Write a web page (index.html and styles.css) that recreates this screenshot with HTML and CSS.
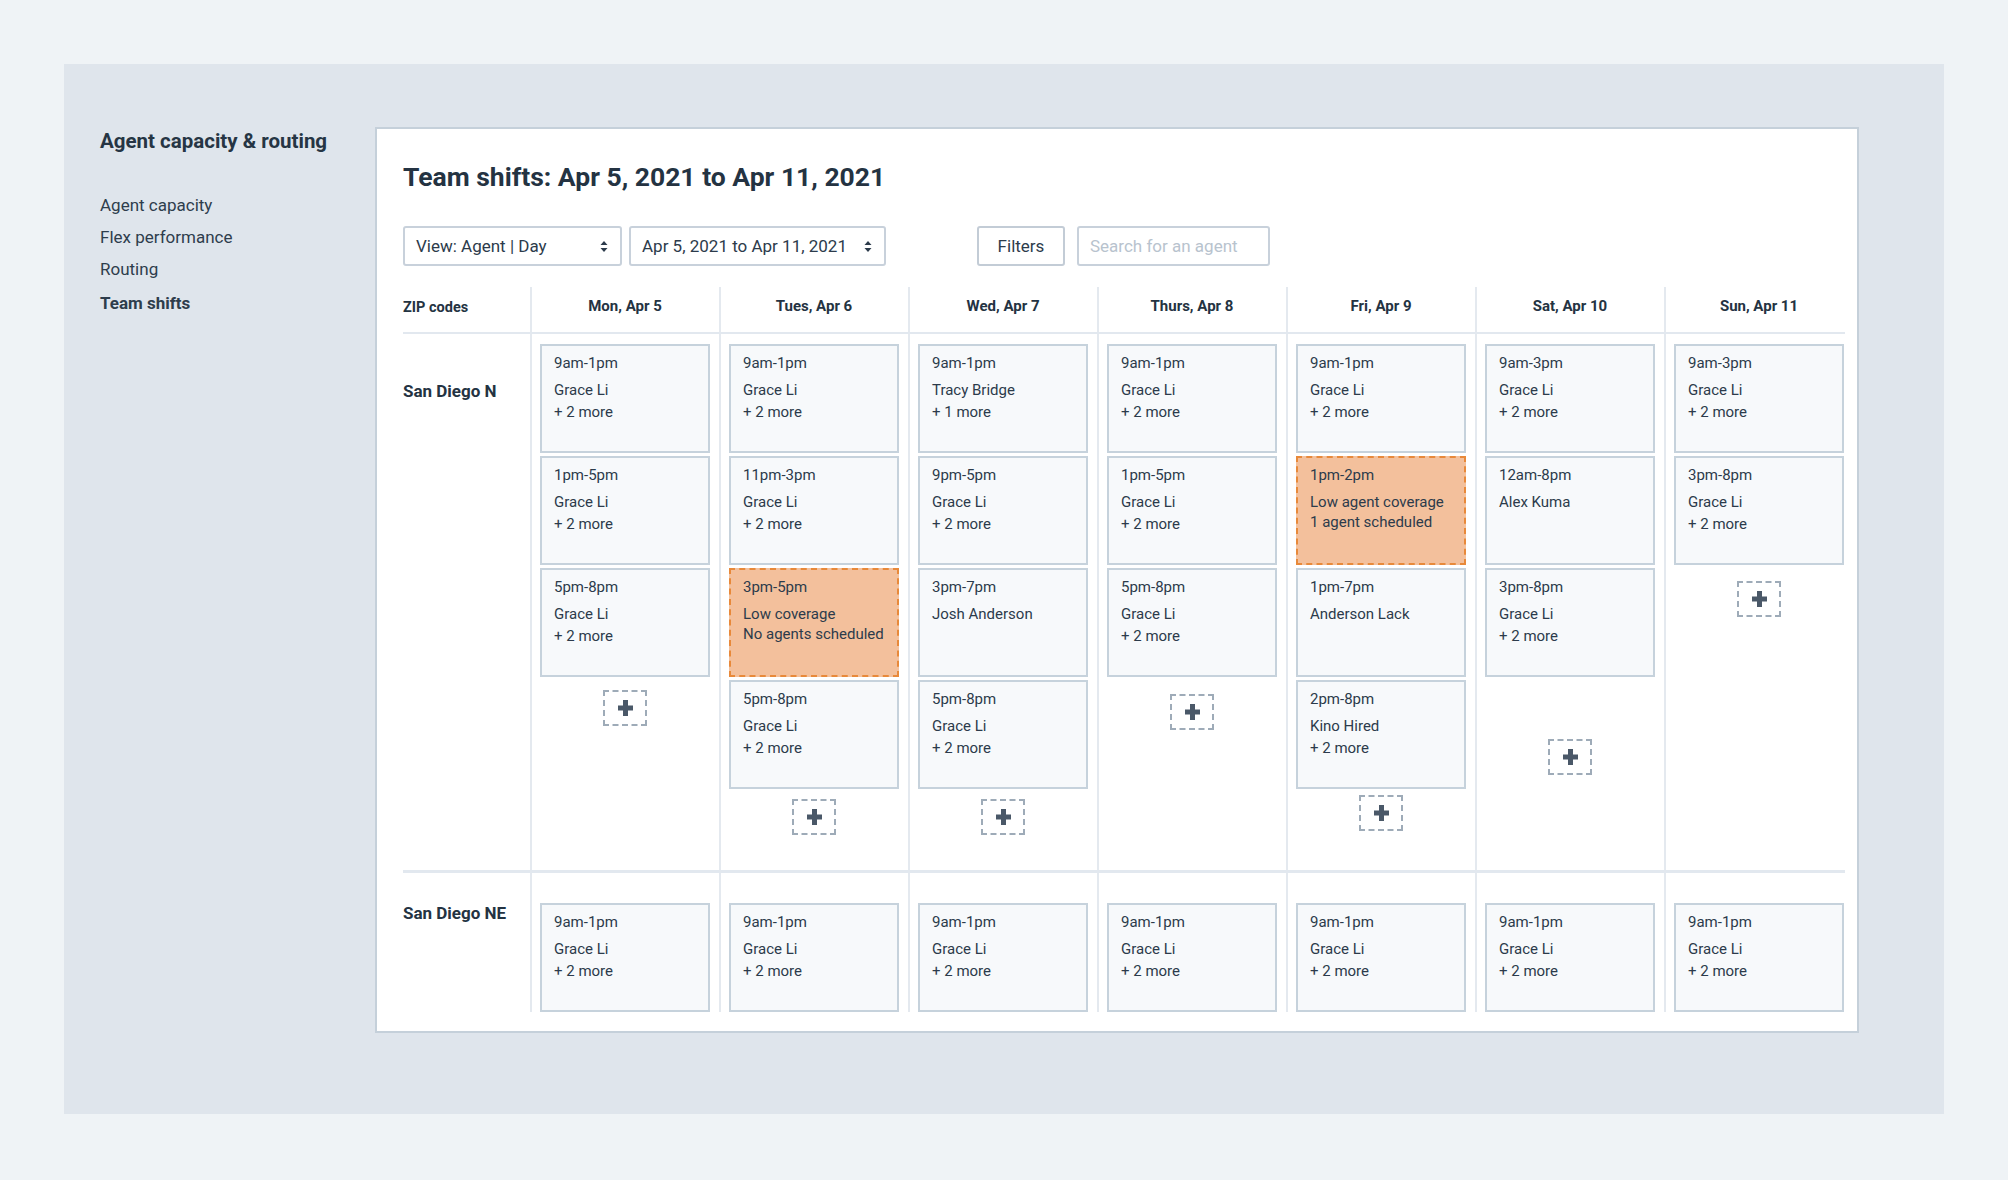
FILE: index.html
```html
<!DOCTYPE html>
<html lang="en">
<head>
<meta charset="utf-8">
<title>Team shifts</title>
<link rel="stylesheet" href="styles.css">
</head>
<body>
<div class="shell">
  <aside class="sidebar">
    <h2 class="sidebar-title">Agent capacity &amp; routing</h2>
    <nav class="nav">
      <a class="nav-item">Agent capacity</a>
      <a class="nav-item">Flex performance</a>
      <a class="nav-item">Routing</a>
      <a class="nav-item nav-item--active">Team shifts</a>
    </nav>
  </aside>

  <main class="panel">
    <h1 class="title">Team shifts: Apr 5, 2021 to Apr 11, 2021</h1>

    <div class="controls">
      <div class="select select--view">
        <span>View: Agent | Day</span>
        <svg class="caret" width="8" height="11" viewBox="0 0 8 11"><path d="M4 0 L7.5 4 L0.5 4 Z M4 11 L7.5 7 L0.5 7 Z" fill="#2c3b4b"/></svg>
      </div>
      <div class="select select--range">
        <span>Apr 5, 2021 to Apr 11, 2021</span>
        <svg class="caret" width="8" height="11" viewBox="0 0 8 11"><path d="M4 0 L7.5 4 L0.5 4 Z M4 11 L7.5 7 L0.5 7 Z" fill="#2c3b4b"/></svg>
      </div>
      <button class="btn">Filters</button>
      <div class="search">Search for an agent</div>
    </div>

    <div class="table">
      <div class="trow trow--head">
        <div class="zip-head">ZIP codes</div>
        <div class="day-head"><span>Mon, Apr 5</span></div>
        <div class="day-head"><span>Tues, Apr 6</span></div>
        <div class="day-head"><span>Wed, Apr 7</span></div>
        <div class="day-head"><span>Thurs, Apr 8</span></div>
        <div class="day-head"><span>Fri, Apr 9</span></div>
        <div class="day-head"><span>Sat, Apr 10</span></div>
        <div class="day-head"><span>Sun, Apr 11</span></div>
      </div>

      <div class="trow trow--first">
        <div class="zip zip--first">San Diego N</div>

        <div class="day">
          <div class="shift"><div class="time">9am-1pm</div><div>Grace Li</div><div>+ 2 more</div></div>
          <div class="shift"><div class="time">1pm-5pm</div><div>Grace Li</div><div>+ 2 more</div></div>
          <div class="shift"><div class="time">5pm-8pm</div><div>Grace Li</div><div>+ 2 more</div></div>
          <div class="add add--m15"><svg width="15" height="16" viewBox="0 0 15 16"><rect x="0" y="5.5" width="15" height="5" fill="#4a5868"/><rect x="5" y="0" width="5" height="16" fill="#4a5868"/></svg></div>
        </div>

        <div class="day">
          <div class="shift"><div class="time">9am-1pm</div><div>Grace Li</div><div>+ 2 more</div></div>
          <div class="shift"><div class="time">11pm-3pm</div><div>Grace Li</div><div>+ 2 more</div></div>
          <div class="shift shift--alert"><div class="time">3pm-5pm</div><div>Low coverage</div><div>No agents scheduled</div></div>
          <div class="shift"><div class="time">5pm-8pm</div><div>Grace Li</div><div>+ 2 more</div></div>
          <div class="add"><svg width="15" height="16" viewBox="0 0 15 16"><rect x="0" y="5.5" width="15" height="5" fill="#4a5868"/><rect x="5" y="0" width="5" height="16" fill="#4a5868"/></svg></div>
        </div>

        <div class="day">
          <div class="shift"><div class="time">9am-1pm</div><div>Tracy Bridge</div><div>+ 1 more</div></div>
          <div class="shift"><div class="time">9pm-5pm</div><div>Grace Li</div><div>+ 2 more</div></div>
          <div class="shift"><div class="time">3pm-7pm</div><div>Josh Anderson</div></div>
          <div class="shift"><div class="time">5pm-8pm</div><div>Grace Li</div><div>+ 2 more</div></div>
          <div class="add"><svg width="15" height="16" viewBox="0 0 15 16"><rect x="0" y="5.5" width="15" height="5" fill="#4a5868"/><rect x="5" y="0" width="5" height="16" fill="#4a5868"/></svg></div>
        </div>

        <div class="day">
          <div class="shift"><div class="time">9am-1pm</div><div>Grace Li</div><div>+ 2 more</div></div>
          <div class="shift"><div class="time">1pm-5pm</div><div>Grace Li</div><div>+ 2 more</div></div>
          <div class="shift"><div class="time">5pm-8pm</div><div>Grace Li</div><div>+ 2 more</div></div>
          <div class="add add--m19"><svg width="15" height="16" viewBox="0 0 15 16"><rect x="0" y="5.5" width="15" height="5" fill="#4a5868"/><rect x="5" y="0" width="5" height="16" fill="#4a5868"/></svg></div>
        </div>

        <div class="day">
          <div class="shift"><div class="time">9am-1pm</div><div>Grace Li</div><div>+ 2 more</div></div>
          <div class="shift shift--alert"><div class="time">1pm-2pm</div><div>Low agent coverage</div><div>1 agent scheduled</div></div>
          <div class="shift"><div class="time">1pm-7pm</div><div>Anderson Lack</div></div>
          <div class="shift"><div class="time">2pm-8pm</div><div>Kino Hired</div><div>+ 2 more</div></div>
          <div class="add add--m8"><svg width="15" height="16" viewBox="0 0 15 16"><rect x="0" y="5.5" width="15" height="5" fill="#4a5868"/><rect x="5" y="0" width="5" height="16" fill="#4a5868"/></svg></div>
        </div>

        <div class="day">
          <div class="shift"><div class="time">9am-3pm</div><div>Grace Li</div><div>+ 2 more</div></div>
          <div class="shift"><div class="time">12am-8pm</div><div>Alex Kuma</div></div>
          <div class="shift"><div class="time">3pm-8pm</div><div>Grace Li</div><div>+ 2 more</div></div>
          <div class="add add--m64"><svg width="15" height="16" viewBox="0 0 15 16"><rect x="0" y="5.5" width="15" height="5" fill="#4a5868"/><rect x="5" y="0" width="5" height="16" fill="#4a5868"/></svg></div>
        </div>

        <div class="day">
          <div class="shift"><div class="time">9am-3pm</div><div>Grace Li</div><div>+ 2 more</div></div>
          <div class="shift"><div class="time">3pm-8pm</div><div>Grace Li</div><div>+ 2 more</div></div>
          <div class="add add--m18"><svg width="15" height="16" viewBox="0 0 15 16"><rect x="0" y="5.5" width="15" height="5" fill="#4a5868"/><rect x="5" y="0" width="5" height="16" fill="#4a5868"/></svg></div>
        </div>
      </div>

      <div class="trow trow--second">
        <div class="zip zip--second">San Diego NE</div>
        <div class="day"><div class="shift"><div class="time">9am-1pm</div><div>Grace Li</div><div>+ 2 more</div></div></div>
        <div class="day"><div class="shift"><div class="time">9am-1pm</div><div>Grace Li</div><div>+ 2 more</div></div></div>
        <div class="day"><div class="shift"><div class="time">9am-1pm</div><div>Grace Li</div><div>+ 2 more</div></div></div>
        <div class="day"><div class="shift"><div class="time">9am-1pm</div><div>Grace Li</div><div>+ 2 more</div></div></div>
        <div class="day"><div class="shift"><div class="time">9am-1pm</div><div>Grace Li</div><div>+ 2 more</div></div></div>
        <div class="day"><div class="shift"><div class="time">9am-1pm</div><div>Grace Li</div><div>+ 2 more</div></div></div>
        <div class="day"><div class="shift"><div class="time">9am-1pm</div><div>Grace Li</div><div>+ 2 more</div></div></div>
      </div>
    </div>
  </main>
</div>
</body>
</html>
```

FILE: styles.css
```css
* { box-sizing: border-box; }

html, body {
  margin: 0;
  padding: 0;
}

body {
  background: #eff3f6;
  font-family: Roboto, "Liberation Sans", sans-serif;
  color: #2c3b4b;
  padding: 64px;
  width: 2008px;
  height: 1180px;
  overflow: hidden;
}

.shell {
  background: #dfe5ec;
  width: 1880px;
  height: 1050px;
  display: flex;
  padding-top: 63px;
}

.sidebar {
  width: 311px;
  padding-left: 36px;
  padding-top: 2px;
}

.sidebar-title {
  margin: 0;
  font-size: 20.5px;
  line-height: 25px;
  font-weight: 700;
  color: #263544;
}

.nav {
  display: flex;
  flex-direction: column;
  margin-top: 35px;
}

.nav-item {
  font-size: 17px;
  line-height: 32px;
  color: #2e3d4c;
}

.nav-item--active {
  font-weight: 700;
  line-height: 34px;
  margin-top: 1px;
}

.panel {
  width: 1484px;
  align-self: flex-start;
  background: #ffffff;
  border: 2px solid #c5d0da;
  padding: 32px 11px 19px 26px;
}

.title {
  margin: 0;
  font-size: 26.5px;
  line-height: 32px;
  font-weight: 700;
  color: #243342;
}

.controls {
  display: flex;
  align-items: center;
  margin-top: 33px;
  height: 40px;
}

.select {
  height: 40px;
  border: 2px solid #c8d1db;
  border-radius: 3px;
  display: flex;
  align-items: center;
  justify-content: space-between;
  padding: 0 12px 0 11px;
  font-size: 17px;
  color: #2c3b4b;
}

.select--view { width: 219px; }
.select--range { width: 257px; margin-left: 7px; }

.caret { display: block; }

.btn {
  margin-left: 91px;
  width: 88px;
  height: 40px;
  border: 2px solid #c3ccd6;
  border-radius: 3px;
  background: #ffffff;
  font-family: inherit;
  font-size: 17px;
  color: #2c3b4b;
  padding: 0;
}

.search {
  margin-left: 12px;
  width: 193px;
  height: 40px;
  border: 2px solid #c8d1db;
  border-radius: 3px;
  display: flex;
  align-items: center;
  padding-left: 11px;
  font-size: 17px;
  color: #b8c3ce;
}

.table {
  margin-top: 21px;
  width: 1442px;
}

.trow {
  display: grid;
  grid-template-columns: 127px repeat(6, 189px) 181px;
}

.trow--head {
  height: 47px;
  border-bottom: 2px solid #e2e8ef;
}

.zip-head {
  padding-top: 11px;
  font-size: 14.5px;
  line-height: 20px;
  font-weight: 700;
  color: #243342;
}

.day-head {
  border-left: 2px solid #e4e9ef;
  padding-top: 9px;
  padding-left: 8px;
  font-size: 15px;
  line-height: 20px;
  font-weight: 700;
  color: #243342;
}

.day-head span {
  display: block;
  width: 170px;
  text-align: center;
}

.trow--first {
  height: 539px;
  border-bottom: 3px solid #e2e8ef;
}

.zip {
  font-size: 17px;
  line-height: 22px;
  font-weight: 700;
  color: #243342;
}

.zip--first { padding-top: 46px; }
.zip--second { padding-top: 29px; }

.day {
  border-left: 2px solid #e4e9ef;
  padding-left: 8px;
  padding-top: 10px;
}

.trow--second .day {
  padding-top: 30px;
}

.shift {
  width: 170px;
  height: 109px;
  margin-bottom: 3px;
  background: #f7f9fb;
  border: 2px solid #c6d2dc;
  padding: 6px 12px 0 12px;
  font-size: 15px;
  line-height: 22px;
  color: #2c3b4b;
}

.trow--second .shift { margin-bottom: 0; }

.time {
  margin-bottom: 5px;
}

.shift--alert {
  background: #f3c09c;
  border: 2px dashed #e8893a;
  line-height: 20px;
}

.shift--alert .time {
  line-height: 22px;
  margin-bottom: 6px;
}

.add {
  width: 44px;
  height: 36px;
  margin: 10px 0 0 63px;
  border: 2px dashed #9eabb8;
  display: flex;
  align-items: center;
  justify-content: center;
}

.add--m15 { margin-top: 13px; }
.add--m19 { margin-top: 17px; }
.add--m18 { margin-top: 16px; }
.add--m8 { margin-top: 6px; }
.add--m64 { margin-top: 62px; }
```
